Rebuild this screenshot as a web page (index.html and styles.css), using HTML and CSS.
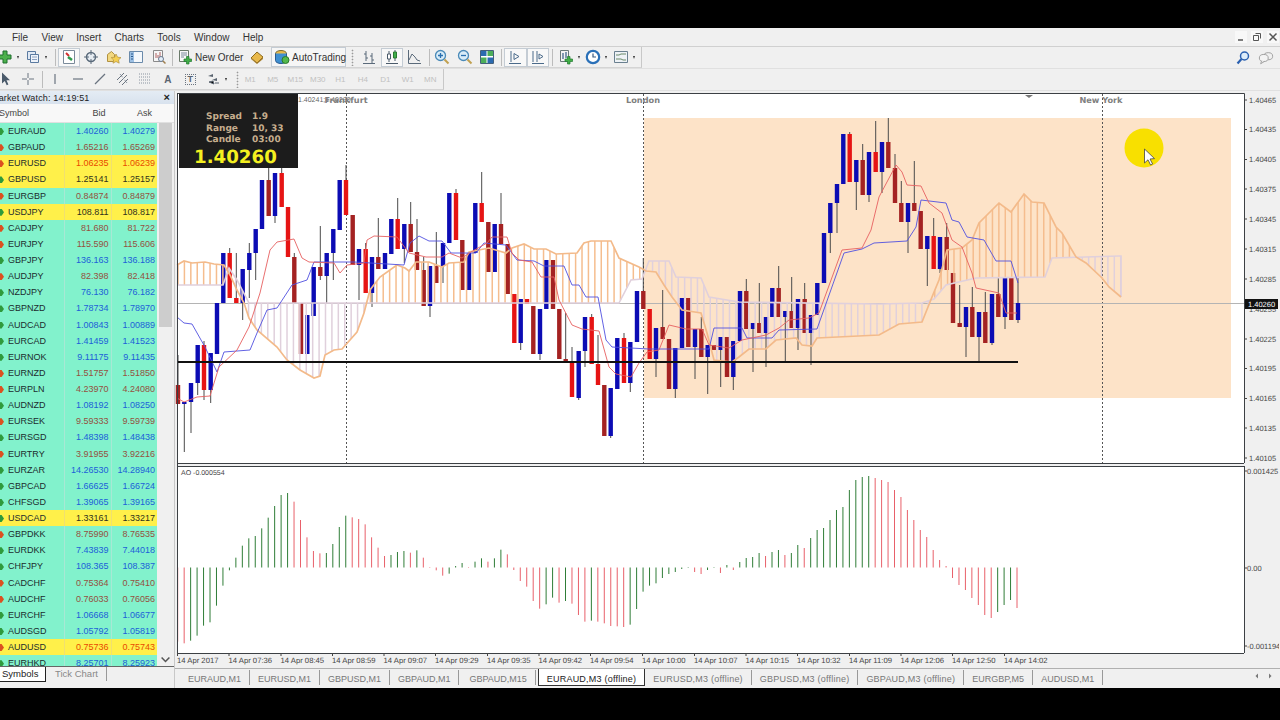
FILE: index.html
```html
<!DOCTYPE html>
<html lang="en">
<head>
    <meta charset="UTF-8">
    <title>MetaTrader - EURAUD,M3 (offline)</title>
    <link rel="stylesheet" href="styles.css">
</head>
<body>
    <div class="window">
        <div class="menubar">
            <span>File</span><span>View</span><span>Insert</span><span>Charts</span><span>Tools</span><span>Window</span><span>Help</span>
            <div class="win-controls">
                <svg viewBox="0 0 12 12"><path d="M3 9h5" stroke="#555" stroke-width="1.5"/></svg>
                <svg viewBox="0 0 12 12"><path d="M4.5 2.5h5v5M2.5 4.5h5v5h-5z" fill="none" stroke="#555"/></svg>
                <svg viewBox="0 0 12 12"><path d="M2.5 2.5l7 7M9.5 2.5l-7 7" stroke="#555" stroke-width="1.5"/></svg>
            </div>
        </div>

        <div class="toolbar">
            <div class="tools tools-main">
                <div class="btn"><svg viewBox="0 0 16 16"><path d="M6 2h4v4h4v4h-4v4H6v-4H2V6h4z" fill="#4cb04c" stroke="#1c6e2c"/></svg></div>
                <i class="caret"></i>
                <div class="btn gap2"><svg viewBox="0 0 16 16"><path d="M2.5 2.5h8v8h-8z" fill="#dfe8f4" stroke="#5a7aa0"/><path d="M5.5 5.5h8v8h-8z" fill="#eef3fa" stroke="#5a7aa0"/><path d="M7 8h5M7 10.5h5" stroke="#8aa0c0"/></svg></div>
                <i class="caret"></i>
                <i class="sep sep-a"></i>
                <div class="btn on"><svg viewBox="0 0 16 16"><path d="M2.5 1.5h11v13h-11z" fill="#fff" stroke="#7a8a9a"/><path d="M5 4l3 3" stroke="#d03030" stroke-width="2"/><path d="M7 8l4 3" stroke="#2e9a4a" stroke-width="2.5"/></svg></div>
                <div class="btn"><svg viewBox="0 0 16 16"><circle cx="8" cy="8" r="4.5" fill="#e6ecf2" stroke="#5a6a7a" stroke-width="1.5"/><path d="M8 1v5M8 10v5M1 8h5M10 8h5" stroke="#5a6a7a"/></svg></div>
                <div class="btn"><svg viewBox="0 0 16 16"><path d="M1.5 5.5l4-3 3 3v7h-7z" fill="#f2d880" stroke="#b09040"/><path d="M10 5l1.600 3.200 3.400.4-2.500 2.300.7 3.300-3.200-1.700-3 1.700.6-3.300-2.400-2.300 3.400-.4z" fill="#f5cf50" stroke="#b09040" stroke-width=".7"/></svg></div>
                <div class="btn"><svg viewBox="0 0 16 16"><path d="M1.5 2.5h13v11h-13z" fill="#f4f8fc" stroke="#6a8aaa"/><path d="M2 3h4v10H2z" fill="#9cc0e4"/><path d="M3 5h2M3 7.5h2M3 10h2" stroke="#2a5a90"/></svg></div>
                <div class="btn"><svg viewBox="0 0 16 16"><path d="M2.5 1.5h9v11h-9z" fill="#f6f6f6" stroke="#8a8a8a"/><path d="M5 9V4M7 9V6M9 9V3" stroke="#b06060"/><circle cx="10" cy="10" r="2.5" fill="#e4eef8" stroke="#6a7a90"/><path d="M12 12l2.500 2.500" stroke="#a08050" stroke-width="1.5"/></svg></div>
                <i class="sep sep-b"></i>
                <div class="btn-text order"><svg viewBox="0 0 16 16"><path d="M2.5 1.5h9v11h-9z" fill="#f8f8f8" stroke="#6a7a6a"/><path d="M4 4h6M4 6h6M4 8h3" stroke="#7a8a9a"/><path d="M9.500 7.500h2.500V10h2.500v2.500H12V15H9.500v-2.500H7V10h2.500z" fill="#42ac48" stroke="#1f7a2e" stroke-width=".7"/></svg><span>New Order</span></div>
                <div class="btn"><svg viewBox="0 0 16 16"><path d="M2 9l6-6 6 5-6 6z" fill="#e8b84a" stroke="#8a6a20"/><path d="M2 9l6 5 6-6v2l-6 5-6-5z" fill="#a88030"/></svg></div>
                <div class="btn-text autotrading"><svg viewBox="0 0 16 16"><ellipse cx="7" cy="4.5" rx="5.5" ry="3" fill="#e8b84a" stroke="#7a6a30"/><path d="M1.5 4.500v7c0 1.700 2.500 3 5.500 3s5.500-1.300 5.500-3v-7" fill="#3f8fd0" stroke="#2a5a90"/><circle cx="11.5" cy="11" r="3.5" fill="#52b84c" stroke="#2a7a2a"/></svg><span>AutoTrading</span></div>
                <i class="grip"></i>
                <div class="btn"><svg viewBox="0 0 16 16"><path d="M5 2v10M3 5h2M5 9h2M11 4v10M9 7h2M11 11h2M2 14.500h12" fill="none" stroke="#5a6a7a"/></svg></div>
                <div class="btn on"><svg viewBox="0 0 16 16"><path d="M5 2v11M11 1v11M2 14.500h12" stroke="#4a5a6a"/><path d="M3.500 5h3v5h-3z" fill="#fff" stroke="#4a5a6a"/><path d="M9.500 3h3v6h-3z" fill="#3fae4a" stroke="#2a7a30"/></svg></div>
                <div class="btn"><svg viewBox="0 0 16 16"><path d="M2.500 1v13.500H15" fill="none" stroke="#5a6a7a"/><path d="M3 11l3-6 3 3 2 3 3 1" fill="none" stroke="#5a6a7a"/></svg></div>
                <i class="sep sep-c"></i>
                <div class="btn"><svg viewBox="0 0 16 16"><circle cx="6.5" cy="6.5" r="5" fill="#d8ecf8" stroke="#4a8ab8" stroke-width="1.3"/><path d="M4 6.500h5M6.500 4v5" stroke="#2a70b0" stroke-width="1.3"/><path d="M10.500 10.500l4 4" stroke="#c0a050" stroke-width="2"/></svg></div>
                <div class="btn"><svg viewBox="0 0 16 16"><circle cx="6.5" cy="6.5" r="5" fill="#d8ecf8" stroke="#4a8ab8" stroke-width="1.3"/><path d="M4 6.500h5" stroke="#2a70b0" stroke-width="1.3"/><path d="M10.500 10.500l4 4" stroke="#c0a050" stroke-width="2"/></svg></div>
                <div class="btn"><svg viewBox="0 0 16 16"><path d="M1.500 1.500h13v13h-13z" fill="#fff" stroke="#44607c"/><path d="M2 2h5.500v5H2z" fill="#2a6ab0"/><path d="M8.500 2H14v5H8.500z" fill="#4cae5a"/><path d="M2 8.500h5.500V14H2z" fill="#4cae5a"/><path d="M8.500 8.500H14V14H8.500z" fill="#2a6ab0"/></svg></div>
                <i class="sep sep-d"></i>
                <div class="btn on"><svg viewBox="0 0 16 16"><path d="M4 2v11M2 14.500h12" stroke="#4a6a8a"/><path d="M7 4.500l5 3-5 3z" fill="none" stroke="#4a6a8a"/></svg></div>
                <div class="btn on"><svg viewBox="0 0 16 16"><path d="M3 2v11M7 2v11M2 14.500h12" stroke="#4a6a8a"/><path d="M9 5l4 2.500L9 10z" fill="none" stroke="#4a6a8a"/></svg></div>
                <i class="sep sep-d"></i>
                <div class="btn"><svg viewBox="0 0 16 16"><path d="M2.500 1.500h8v11h-8z" fill="#f4f4f4" stroke="#6a7a7a"/><path d="M5 4v6M8 3v6" stroke="#5a7a9a" stroke-width="1.5"/><path d="M9.500 7.500H12V10h2.500v2.500H12V15H9.500v-2.500H7V10h2.500z" fill="#42b048" stroke="#1f7a2e" stroke-width=".7"/></svg></div>
                <i class="caret"></i>
                <div class="btn gap2"><svg viewBox="0 0 16 16"><circle cx="8" cy="8" r="6.200" fill="#fff" stroke="#2a70b8" stroke-width="2.200"/><path d="M8 4.500V8h3" fill="none" stroke="#3a5a80" stroke-width="1.200"/></svg></div>
                <i class="caret"></i>
                <div class="btn gap2"><svg viewBox="0 0 16 16"><path d="M1.500 2.500h13v11h-13z" fill="#eef2f6" stroke="#6a8090"/><path d="M3 6h3l2-1 5 0M3 10h5l2 1 3 0" fill="none" stroke="#6a8a6a"/></svg></div>
                <i class="caret"></i>
            </div>
            <div class="tools-right">
                <svg viewBox="0 0 16 16"><circle cx="9.5" cy="6" r="4" fill="#dcecfa" stroke="#2a60b0" stroke-width="1.5"/><path d="M6.500 9l-4 4.500" stroke="#2a60b0" stroke-width="2.200"/></svg>
                <svg viewBox="0 0 18 16"><ellipse cx="11.5" cy="6" rx="5" ry="4" fill="#f0f0f0" stroke="#999"/><ellipse cx="6.5" cy="8" rx="5" ry="4" fill="#f4f4f4" stroke="#999"/><path d="M4 11.500l-1 3 4-2.500" fill="#f4f4f4" stroke="#999"/></svg>
            </div>
        </div>

        <div class="toolbar">
            <div class="tools tools-second">
                <div class="btn"><svg viewBox="0 0 16 16"><path d="M5 1.500v11l2.800-2.600 1.900 4.300 1.700-.8-1.900-4.200H13z" fill="#4a5a6a"/></svg></div>
                <div class="btn"><svg viewBox="0 0 16 16"><path d="M8 2v5M8 9v5M2 8h5M9 8h5" stroke="#6a7480"/></svg></div>
                <i class="sep sep-f"></i>
                <div class="btn"><svg viewBox="0 0 16 16"><path d="M8 3v10" stroke="#6a7480" stroke-width="1.2"/></svg></div>
                <div class="btn"><svg viewBox="0 0 16 16"><path d="M3 8h10" stroke="#6a7480" stroke-width="1.2"/></svg></div>
                <div class="btn"><svg viewBox="0 0 16 16"><path d="M3 13L13 3" stroke="#6a7480" stroke-width="1.2"/></svg></div>
                <div class="btn"><svg viewBox="0 0 16 16"><path d="M2 9l7-7M4 12l8-8M7 14l6-6" stroke="#6a7480"/><path d="M5 3l7 9" stroke="#8a94a0" stroke-dasharray="1.5 1"/></svg></div>
                <div class="btn"><svg viewBox="0 0 16 16"><path d="M2 3h12M2 6h12M2 9h12M2 12h12" stroke="#8a94a0" stroke-dasharray="1 1"/></svg></div>
                <div class="btn tool-letter">A</div>
                <div class="btn"><span class="t-box">T</span></div>
                <div class="btn"><svg viewBox="0 0 16 16"><path d="M3 5l5-2v3zM7 9l5-2v3z" fill="#5a6470"/><path d="M4 11l5 2-1-3zM10 12h4" stroke="#5a6470"/></svg></div>
                <i class="caret"></i>
                <i class="grip grip-b"></i>
                <div class="btn tf">M1</div>
                <div class="btn tf">M5</div>
                <div class="btn tf">M15</div>
                <div class="btn tf">M30</div>
                <div class="btn tf">H1</div>
                <div class="btn tf">H4</div>
                <div class="btn tf">D1</div>
                <div class="btn tf">W1</div>
                <div class="btn tf">MN</div>
            </div>
        </div>

        <div class="main">
            <aside class="market">
                <div class="market-title"><span>Market Watch: 14:19:51</span><b>&times;</b></div>
                <div class="market-head"><span>Symbol</span><span>Bid</span><span>Ask</span></div>
                <div class="market-body">
                    <div class="rows">
                        <div class="row up"><span>EURAUD</span><span>1.40260</span><span>1.40279</span></div>
                        <div class="row down"><span>GBPAUD</span><span>1.65216</span><span>1.65269</span></div>
                        <div class="row down hi"><span>EURUSD</span><span>1.06235</span><span>1.06239</span></div>
                        <div class="row up hi"><span>GBPUSD</span><span>1.25141</span><span>1.25157</span></div>
                        <div class="row down"><span>EURGBP</span><span>0.84874</span><span>0.84879</span></div>
                        <div class="row up hi"><span>USDJPY</span><span>108.811</span><span>108.817</span></div>
                        <div class="row down"><span>CADJPY</span><span>81.680</span><span>81.722</span></div>
                        <div class="row down"><span>EURJPY</span><span>115.590</span><span>115.606</span></div>
                        <div class="row up"><span>GBPJPY</span><span>136.163</span><span>136.188</span></div>
                        <div class="row down"><span>AUDJPY</span><span>82.398</span><span>82.418</span></div>
                        <div class="row up"><span>NZDJPY</span><span>76.130</span><span>76.182</span></div>
                        <div class="row up"><span>GBPNZD</span><span>1.78734</span><span>1.78970</span></div>
                        <div class="row up"><span>AUDCAD</span><span>1.00843</span><span>1.00889</span></div>
                        <div class="row up"><span>EURCAD</span><span>1.41459</span><span>1.41523</span></div>
                        <div class="row up"><span>EURNOK</span><span>9.11175</span><span>9.11435</span></div>
                        <div class="row down"><span>EURNZD</span><span>1.51757</span><span>1.51850</span></div>
                        <div class="row down"><span>EURPLN</span><span>4.23970</span><span>4.24080</span></div>
                        <div class="row up"><span>AUDNZD</span><span>1.08192</span><span>1.08250</span></div>
                        <div class="row down"><span>EURSEK</span><span>9.59333</span><span>9.59739</span></div>
                        <div class="row up"><span>EURSGD</span><span>1.48398</span><span>1.48438</span></div>
                        <div class="row down"><span>EURTRY</span><span>3.91955</span><span>3.92216</span></div>
                        <div class="row up"><span>EURZAR</span><span>14.26530</span><span>14.28940</span></div>
                        <div class="row up"><span>GBPCAD</span><span>1.66625</span><span>1.66724</span></div>
                        <div class="row up"><span>CHFSGD</span><span>1.39065</span><span>1.39165</span></div>
                        <div class="row up hi"><span>USDCAD</span><span>1.33161</span><span>1.33217</span></div>
                        <div class="row down"><span>GBPDKK</span><span>8.75990</span><span>8.76535</span></div>
                        <div class="row up"><span>EURDKK</span><span>7.43839</span><span>7.44018</span></div>
                        <div class="row up"><span>CHFJPY</span><span>108.365</span><span>108.387</span></div>
                        <div class="row down"><span>CADCHF</span><span>0.75364</span><span>0.75410</span></div>
                        <div class="row down"><span>AUDCHF</span><span>0.76033</span><span>0.76056</span></div>
                        <div class="row up"><span>EURCHF</span><span>1.06668</span><span>1.06677</span></div>
                        <div class="row up"><span>AUDSGD</span><span>1.05792</span><span>1.05819</span></div>
                        <div class="row down hi"><span>AUDUSD</span><span>0.75736</span><span>0.75743</span></div>
                        <div class="row up"><span>EURHKD</span><span>8.25701</span><span>8.25923</span></div>
                    </div>
                    <div class="scrollbar">
                        <svg viewBox="0 0 10 10"><path d="M2 6.500L5 3.500l3 3" fill="none" stroke="#555" stroke-width="1.2"/></svg>
                        <div class="scroll-track"><div class="scroll-thumb"></div></div>
                        <svg viewBox="0 0 10 10"><path d="M2 3.500L5 6.500l3-3" fill="none" stroke="#555" stroke-width="1.2"/></svg>
                    </div>
                </div>
                <div class="market-tabs"><span class="market-tab active">Symbols</span><span class="market-tab">Tick Chart</span></div>
            </aside>

            <section class="charts">
                <svg id="chart" class="chart" viewBox="176 92 1104 576">
                    <rect x="176" y="92" width="1104" height="576" fill="#f0f0f0"/>
                    <rect x="179" y="94" width="1066" height="369" fill="#fff"/>
                    <rect x="179" y="467" width="1066" height="186" fill="#fff"/>
                    <rect x="645" y="118" width="587" height="280" fill="#fde3c8"/>

                    <g id="price"></g>
                    <g id="ao"></g>

                    <g class="marker-layer">
                        <circle cx="1145" cy="148" r="19.5" fill="#f8e000"/>
                        <path d="M1145.500 149v14l3.500-3.200 2.600 5.200 2-1-2.600-5 4.500-.4z" fill="#fff" stroke="#444" stroke-width=".8"/>
                    </g>

                    <rect x="180" y="94" width="119" height="74" fill="#1c1c1c"/>
                    <text class="info" x="207" y="119">Spread</text><text class="info" x="253" y="119">1.9</text>
                    <text class="info" x="207" y="131">Range</text><text class="info" x="253" y="131">10, 33</text>
                    <text class="info" x="207" y="142">Candle</text><text class="info" x="253" y="142">03:00</text>
                    <text class="info-price" x="195" y="163">1.40260</text>

                    <text class="stale" x="299" y="102">1.40241;1.40260</text>
                    <text class="session" x="347" y="103">Frankfurt</text>
                    <text class="session" x="644" y="103">London</text>
                    <text class="session" x="1102" y="103">New York</text>
                    <path d="M1026 95h8l-4 3z" fill="#777"/>

                    <g class="frame">
                        <path d="M178 93.500H1245.500V463M178.500 93V653M178 463.500H1245M178 466.500H1245M178 653.500H1245M1245.500 466V653"/>
                    </g>

                    <text class="axis" x="1250" y="102.5">1.40465</text>
                    <text class="axis" x="1250" y="132">1.40435</text>
                    <text class="axis" x="1250" y="162">1.40405</text>
                    <text class="axis" x="1250" y="192">1.40375</text>
                    <text class="axis" x="1250" y="222">1.40345</text>
                    <text class="axis" x="1250" y="252">1.40315</text>
                    <text class="axis" x="1250" y="281.5">1.40285</text>
                    <text class="axis" x="1250" y="311.5">1.40255</text>
                    <text class="axis" x="1250" y="341.5">1.40225</text>
                    <text class="axis" x="1250" y="371">1.40195</text>
                    <text class="axis" x="1250" y="401">1.40165</text>
                    <text class="axis" x="1250" y="431">1.40135</text>
                    <text class="axis" x="1250" y="461">1.40105</text>
                    <rect x="1246" y="299" width="33" height="10" fill="#111"/>
                    <text class="axis axis-now" x="1249" y="306.5">1.40260</text>
                    <text class="axis" x="1248" y="473.5">0.001425</text>
                    <text class="axis" x="1248" y="570.5">0.00</text>
                    <text class="axis" x="1248" y="649">-0.001194</text>
                    <path class="ticks" d="M1245 100h3M1245 129.500h3M1245 159.500h3M1245 189h3M1245 219h3M1245 249h3M1245 279h3M1245 339h3M1245 368.500h3M1245 398.500h3M1245 428h3M1245 458h3M1245 471h3M1245 568h3M1245 646h3"/>

                    <text class="ao-label" x="182" y="475">AO -0.000554</text>

                    <text class="time" x="178" y="663">14 Apr 2017</text>
                    <text class="time" x="229.5" y="663">14 Apr 07:36</text>
                    <text class="time" x="281.5" y="663">14 Apr 08:45</text>
                    <text class="time" x="333" y="663">14 Apr 08:59</text>
                    <text class="time" x="384.5" y="663">14 Apr 09:07</text>
                    <text class="time" x="436" y="663">14 Apr 09:29</text>
                    <text class="time" x="488" y="663">14 Apr 09:35</text>
                    <text class="time" x="539.5" y="663">14 Apr 09:42</text>
                    <text class="time" x="591" y="663">14 Apr 09:54</text>
                    <text class="time" x="643" y="663">14 Apr 10:00</text>
                    <text class="time" x="695" y="663">14 Apr 10:07</text>
                    <text class="time" x="746.5" y="663">14 Apr 10:15</text>
                    <text class="time" x="798" y="663">14 Apr 10:32</text>
                    <text class="time" x="850" y="663">14 Apr 11:09</text>
                    <text class="time" x="901.5" y="663">14 Apr 12:06</text>
                    <text class="time" x="953" y="663">14 Apr 12:50</text>
                    <text class="time" x="1005" y="663">14 Apr 14:02</text>
                    <path class="ticks" d="M178.500 653v3M230 653v3M282 653v3M333.500 653v3M385 653v3M436.500 653v3M488.500 653v3M540 653v3M591.500 653v3M643.500 653v3M695.500 653v3M747 653v3M798.500 653v3M850.500 653v3M902 653v3M953.500 653v3M1005.500 653v3"/>
                </svg>

                <div class="chart-tabs">
                    <span class="chart-tab">EURAUD,M1</span>
                    <span class="chart-tab">EURUSD,M1</span>
                    <span class="chart-tab">GBPUSD,M1</span>
                    <span class="chart-tab">GBPAUD,M1</span>
                    <span class="chart-tab wide">GBPAUD,M15</span>
                    <span class="chart-tab offline active">EURAUD,M3 (offline)</span>
                    <span class="chart-tab offline">EURUSD,M3 (offline)</span>
                    <span class="chart-tab offline">GBPUSD,M3 (offline)</span>
                    <span class="chart-tab offline">GBPAUD,M3 (offline)</span>
                    <span class="chart-tab">EURGBP,M5</span>
                    <span class="chart-tab">AUDUSD,M1</span>
                    <div class="tab-arrows">
                        <svg viewBox="0 0 8 8"><path d="M5 1.500L2.500 4 5 6.500z" fill="#777"/></svg>
                        <svg viewBox="0 0 8 8"><path d="M3 1.500L5.500 4 3 6.500z" fill="#777"/></svg>
                    </div>
                </div>
            </section>
        </div>
    </div>
    <script src="chart.js"></script>
</body>
</html>
```

FILE: styles.css
```css
body {
    margin: 0;
    height: 720px;
    overflow: hidden;
    background-color: #000;
    font-family: "Liberation Sans", Arial, sans-serif;
    color: #222;
}

.window {
    margin-top: 28px;
    height: 660px;
    background-color: #f0f0f0;
    display: flex;
    flex-direction: column;
    overflow: hidden;
}

.menubar {
    height: 19px;
    flex: none;
    display: flex;
    align-items: center;
    gap: 13.3px;
    padding-left: 12px;
    font-size: 10px;
    color: #333;
    border-bottom: 1px solid #d0d0d0;
    box-sizing: border-box;
}

.win-controls {
    margin-left: auto;
    display: flex;
    gap: 4px;
    padding-right: 1px;
}

.win-controls svg {
    width: 12px;
    height: 12px;
    background-color: #f8f8f8;
}

.toolbar {
    height: 22px;
    flex: none;
    display: flex;
    align-items: center;
    border-bottom: 1px solid #e0e0e0;
    box-sizing: border-box;
}

.tools {
    display: flex;
    align-items: center;
    margin-left: -6px;
    height: 21px;
    border-right: 1px solid #c8c8c8;
    border-bottom: 1px solid #d4d4d4;
    box-sizing: border-box;
}

.tools-main {
    padding-right: 6px;
}

.tools-second {
    padding-right: 1px;
}

.btn {
    width: 22.5px;
    height: 19px;
    flex: none;
    display: flex;
    align-items: center;
    justify-content: center;
    box-sizing: border-box;
}

.btn svg,
.btn-text svg {
    width: 16px;
    height: 16px;
    flex: none;
}

.btn.on {
    background-color: #f8f8f8;
    border: 1px solid #c4ccd4;
}

.gap2 {
    margin-left: 2px;
}

.caret {
    width: 0;
    height: 0;
    margin: 0 .5px;
    flex: none;
    border-left: 1.5px solid transparent;
    border-right: 1.5px solid transparent;
    border-top: 3px solid #333;
}

.sep {
    width: 1px;
    height: 17px;
    flex: none;
    background-color: #bcbcbc;
}

.sep-a { margin: 0 1.5px 0 8px; }
.sep-b { margin: 0 3px 0 2px; }
.sep-c { margin: 0 1.5px 0 3px; }
.sep-d { margin: 0 2px 0 2.5px; }
.sep-f { margin: 0 1px 0 3px; }

.btn-text {
    display: flex;
    align-items: center;
    flex: none;
    font-size: 10px;
    color: #333;
    white-space: nowrap;
    box-sizing: border-box;
}

.order {
    width: 66px;
    gap: 2px;
    padding-left: 1px;
    margin-right: 3.5px;
}

.autotrading {
    width: 75px;
    height: 20px;
    gap: 2px;
    margin-left: 3px;
    padding-left: 2px;
    background-color: #f6f6f6;
    border: 1px solid #c4ccd4;
}

.grip {
    width: 3px;
    height: 17px;
    margin: 0 4px 0 5px;
    flex: none;
    background-image: radial-gradient(#9a9a9a 40%, transparent 50%);
    background-size: 3px 3px;
}

.grip-b {
    margin: 0 0 0 9px;
}

.tool-letter {
    font-size: 10px;
    font-weight: bold;
    color: #5a6470;
}

.t-box {
    width: 11px;
    height: 11px;
    box-sizing: border-box;
    border: 1px dotted #6a7480;
    font-size: 9px;
    font-weight: bold;
    line-height: 9px;
    text-align: center;
    color: #5a6470;
}

.tf {
    font-size: 8px;
    color: #c0c0c0;
}

.tools-right {
    margin-left: auto;
    display: flex;
    gap: 7px;
    align-items: center;
    padding-right: 6px;
}

.tools-right svg {
    width: 16px;
    height: 16px;
}

.main {
    flex: 1;
    min-height: 0;
    display: flex;
}

.market {
    width: 175px;
    flex: none;
    display: flex;
    flex-direction: column;
    font-size: 9px;
    border-right: 1px solid #c8c8c8;
    box-sizing: border-box;
}

.market-title {
    height: 13px;
    flex: none;
    display: flex;
    align-items: center;
    justify-content: space-between;
    background: linear-gradient(#e4ecf4, #d8e2ee);
    padding-right: 4px;
    white-space: nowrap;
}

.market-title span {
    margin-left: -9px;
    font-size: 9px;
    letter-spacing: .15px;
}

.market-title b {
    font-size: 11px;
    line-height: 11px;
}

.market-head {
    height: 19px;
    flex: none;
    display: grid;
    grid-template-columns: 64px 46.5px 46.5px;
    align-items: center;
    background-color: #f8f8f8;
    color: #444;
    border-bottom: 1px solid #e0e0e0;
    box-sizing: border-box;
}

.market-head span {
    text-align: right;
    padding-right: 5px;
}

.market-head span:first-child {
    text-align: left;
    margin-left: -1px;
}

.market-body {
    flex: 1;
    min-height: 0;
    display: flex;
    overflow: hidden;
}

.rows {
    width: 157px;
    flex: none;
    overflow: hidden;
}

.row {
    height: 16.13px;
    display: grid;
    grid-template-columns: 64px 46.5px 46.5px;
    align-items: center;
    position: relative;
    background-color: #82f2cc;
}

.row::before {
    content: "";
    position: absolute;
    left: 0;
    top: 5px;
    width: 4px;
    height: 7px;
    clip-path: polygon(0 0, 40% 0, 100% 50%, 40% 100%, 0 100%);
}

.row.up::before {
    background-color: #2f9a3c;
}

.row.down::before {
    background-color: #dc5020;
}

.row.hi {
    background-color: #fff04a;
}

.row span {
    text-align: right;
    padding-right: 2px;
    height: 100%;
    line-height: 16px;
    border-left: 1px solid #a8e8d4;
    box-sizing: border-box;
}

.row.hi span {
    border-left-color: #f0e070;
}

.row span:first-child {
    text-align: left;
    padding-left: 8px;
    border-left: 0;
    color: #1c2c2c;
}

.row.up span {
    color: #1c60d8;
}

.row.down span {
    color: #955040;
}

.row.up.hi span {
    color: #30301c;
}

.row.down.hi span {
    color: #e84a00;
}

.row.up span:first-child,
.row.down span:first-child {
    color: #1c2c2c;
}

.scrollbar {
    width: 13px;
    margin-left: 2px;
    margin-top: -19px;
    flex: none;
    display: flex;
    flex-direction: column;
}

.scrollbar svg {
    width: 13px;
    height: 13px;
    flex: none;
}

.scroll-track {
    flex: 1;
    background-color: #f0f0f0;
}

.scroll-thumb {
    height: 204px;
    margin-top: 6px;
    background-color: #cdcdcd;
}

.market-tabs {
    height: 22px;
    flex: none;
    display: flex;
    align-items: flex-start;
    border-top: 1px solid #666;
    box-sizing: border-box;
    font-size: 9.5px;
}

.market-tab {
    height: 15px;
    line-height: 14px;
    padding: 0 8px 0 2px;
    color: #888;
}

.market-tab.active {
    width: 46px;
    box-sizing: border-box;
    background-color: #fff;
    color: #222;
    border-right: 1px solid #222;
    border-bottom: 1px solid #222;
    margin-right: 7px;
}

.market-tab:last-child {
    height: 14px;
    border-right: 1px solid #999;
}

.charts {
    flex: 1;
    min-width: 0;
    display: flex;
    flex-direction: column;
}

.chart {
    width: 1104px;
    height: 576px;
    flex: none;
    display: block;
    margin-top: 1px;
    text-rendering: geometricPrecision;
}

.frame path {
    fill: none;
    stroke: #3c4044;
    stroke-width: 1;
}

.ticks {
    fill: none;
    stroke: #444;
    stroke-width: 1;
}

.info {
    font: bold 9px "DejaVu Sans", sans-serif;
    fill: #c6ae8e;
}

.info-price {
    font: bold 18.2px "DejaVu Sans", sans-serif;
    fill: #f4f020;
}

.stale {
    font: 7px "Liberation Sans", sans-serif;
    fill: #666;
}

.session {
    font: bold 8.2px "DejaVu Sans", sans-serif;
    fill: #808080;
    text-anchor: middle;
}

.axis {
    font: 7.5px "Liberation Sans", sans-serif;
    fill: #444;
}

.axis-now {
    fill: #fff;
}

.ao-label {
    font: 7px "Liberation Sans", sans-serif;
    fill: #444;
}

.time {
    font: 7.7px "Liberation Sans", sans-serif;
    fill: #444;
}

.chart-tabs {
    flex: 1;
    display: flex;
    align-items: flex-start;
    font-size: 9px;
    color: #777;
    padding-left: 5px;
    border-top: 1px solid #b0b0b0;
    box-sizing: border-box;
}

.chart-tab {
    height: 15px;
    line-height: 18px;
    padding: 0 8px;
    white-space: nowrap;
    border-right: 1px solid #999;
    margin-top: 1px;
}

.chart-tab.wide {
    margin-left: 2px;
    margin-right: 2px;
}

.chart-tab.offline {
    letter-spacing: .22px;
}

.chart-tab.active {
    background-color: #fff;
    color: #222;
    border: 1px solid #333;
    border-top: 0;
    margin-top: 0;
    height: 16px;
    line-height: 20px;
}

.tab-arrows {
    margin-left: auto;
    display: flex;
    gap: 5px;
    padding: 3px 6px 0 0;
}

.tab-arrows svg {
    width: 8px;
    height: 8px;
}
```

FILE: chart.js
```javascript
// x, body top, body bottom, colour, wick top, wick bottom (wick defaults to the body)
const CANDLES = [
    [179,385,404,'m',355],[185.3,402,404,'b',402,452],[192,383,402,'b',383,433],[198.7,345,383,'b',345,395],
    [205,345,390,'r',341,400],[211.7,353,390,'b',353,403],[218,303,354,'b'],[224.3,253,303,'b'],
    [230.7,253,298,'r',248],[237.3,298,303,'r',253],[243.7,269,303,'b',269,320],[250.3,253,270,'b',243,298],
    [256.7,229,253,'b',229,280],[263,180,229,'b'],[269.7,180,216,'m',167],[276,173,216,'b',173,223],
    [282.7,173,207,'r',167],[289,207,257,'r'],[295.3,257,303,'m',253],[302,303,354,'m'],
    [308.3,315,354,'b'],[314.7,267,316,'b'],[321.3,267,276,'m',226,280],[327.7,253,276,'b',253,303],
    [334.3,229,253,'b',229,280],[340.7,180,230,'b'],[347,180,215,'r',165],[353.7,215,265,'m'],
    [360,249,265,'b',249,300],[366.7,249,293,'r',243],[373,257,293,'b',257,307],[379.3,257,269,'m',218],
    [386,253,269,'b'],[392.3,219,254,'b'],[398.7,219,249,'r',198],[405.3,224,249,'b',224,263],
    [411.7,224,252,'m',202],[418,252,270,'m',219],[424.7,270,306,'m',257],[431,266,306,'b',266,317],
    [437.3,266,283,'m',232],[444,243,266,'b',243,283],[450.3,193,243,'b'],[457,193,240,'r',189],
    [463.3,240,290,'m'],[470,253,290,'b'],[476.3,203,253,'b'],[482.7,203,222,'r',172],
    [489.3,222,272,'m'],[495.7,224,272,'b'],[502,224,244,'m',193],[508.7,244,294,'m'],
    [515.3,294,343,'r'],[521.7,299,343,'b',299,350],[528,299,304,'r'],[534.3,306,354,'m'],
    [541,309,354,'b',309,360],[547.3,260,309,'b'],[554,260,309,'m'],[560.3,309,359,'m'],
    [566.7,359,363,'m',313],[573,363,397,'r',347],[579.7,351,398,'b',351,400],[586,317,351,'b',317,367],
    [592.7,317,364,'r',314],[599,364,385,'r',335],[605.3,385,436,'m'],[611.7,388,436,'b',388,438],
    [618.3,338,389,'b'],[625,338,383,'r',333],[631.3,342,383,'b',342,392],[638,291,342,'b'],
    [644.3,291,309,'m',258],[650.7,309,359,'r'],[657,328,359,'b',328,377],[663.7,327,339,'m',290],
    [670,339,389,'m'],[676.3,348,389,'b',348,398],[683,298,348,'b'],[689.3,298,347,'m'],
    [696,329,347,'b',329,379],[702.3,329,357,'m',317],[708.7,345,357,'b',345,394],[715,345,350,'m'],
    [721.7,337,350,'b',337,387],[728,337,377,'m'],[734.3,341,377,'b',341,390],[741,291,341,'b'],
    [747.3,291,329,'m',279],[754,323,329,'b',323,372],[760.3,323,333,'m',283],[767,317,333,'b',317,367],
    [773.3,288,317,'b'],[779.7,288,317,'m',266],[786.3,311,317,'b',311,361],[792.7,311,328,'m',277],
    [799,299,328,'b',299,350],[805.7,299,333,'m',283],[812,315,333,'b',315,365],[818.3,283,315,'b'],
    [825,233,283,'b'],[831.3,203,233,'b',203,253],[838,184,203,'b',184,233],[844.3,134,184,'b'],
    [850.7,134,182,'r',132],[857.3,160,182,'b',160,210],[863.7,160,195,'m',144],[870,152,195,'b',152,202],
    [876.7,152,172,'r',121],[883,142,172,'b',142,193],[889.3,142,168,'m',118],[896,168,203,'m',154],
    [902.3,203,222,'m',181],[909,203,222,'b',203,253],[915.3,203,211,'m',161],[921.7,211,249,'m'],
    [928.3,236,249,'b',236,286],[934.7,236,269,'r',218],[941,237,269,'b',237,273],[947.7,237,270,'m',223],
    [954,273,323,'m'],[960.7,323,327,'m',285],[967,307,327,'b',307,357],[973.3,307,337,'m',287],
    [980,312,337,'b',312,362],[986.3,312,343,'m',292],[993,294,343,'b',294,345],[999.3,294,317,'m',278],
    [1006,278,317,'b',278,329],[1012.3,278,320,'m'],[1019,303,320,'b',278,323]
];

const SPAN_A = [
    [178,265],[185,261],[193,263],[206,262],[215,264],[225,265],[231,275],[238,290],[245,303],[250,318],
    [258,330],[278,347],[288,360],[301,370],[315,378],[321,376],[326,355],[335,350],[343,349],[358,332],
    [365,313],[371,290],[381,277],[398,265],[406,268],[410,271],[417,262],[430,262],[443,267],[450,263],
    [465,262],[470,252],[490,248],[507,253],[513,248],[525,244],[535,249],[547,249],[557,254],[578,253],
    [585,243],[592,241],[612,241],[620,258],[640,267],[647,271],[657,272],[665,285],[673,297],[683,310],
    [702,313],[708,333],[715,360],[733,362],[740,357],[750,349],[767,349],[777,340],[797,338],[803,345],
    [813,346],[818,338],[880,335],[900,324],[923,322],[933,297],[940,280],[948,250],[963,248],[973,240],
    [980,223],[1000,203],[1012,212],[1025,194],[1033,202],[1045,203],[1057,227],[1063,233],[1077,257],
    [1087,263],[1103,278],[1110,287],[1122,297]
];

const SPAN_B = [
    [178,285],[224,285],[230,268],[238,280],[250,303],[620,303],[632,280],[643,279],[650,261],[670,261],
    [677,277],[702,278],[710,297],[740,302],[880,304],[923,303],[935,299],[947,285],[977,278],[1046,277],
    [1053,258],[1120,256],[1122,256],[1122,297]
];

const TENKAN = [
    [178,398],[185,402],[198,397],[211,396],[220,367],[238,350],[250,327],[261,293],[271,250],[278,242],
    [295,239],[303,258],[310,262],[335,263],[341,273],[348,265],[365,263],[368,240],[375,236],[398,237],
    [410,253],[427,257],[443,257],[450,253],[463,258],[472,252],[488,243],[493,237],[508,237],[513,253],
    [520,260],[533,262],[542,277],[555,277],[560,300],[573,325],[583,329],[600,331],[610,367],[617,374],
    [632,377],[640,363],[648,352],[660,350],[670,325],[687,329],[703,329],[710,345],[730,348],[743,340],
    [767,335],[780,328],[790,320],[810,318],[820,313],[843,250],[863,248],[872,230],[880,197],[897,165],
    [903,172],[908,185],[922,186],[930,203],[943,213],[953,240],[963,247],[973,273],[977,288],[1000,293],
    [1007,313],[1018,313]
];

const KIJUN = [
    [178,317],[185,323],[193,324],[206,347],[218,372],[225,352],[251,350],[258,333],[268,310],[278,308],
    [293,285],[308,280],[315,262],[355,262],[405,265],[411,243],[420,236],[430,241],[443,241],[452,253],
    [477,253],[485,243],[507,245],[518,260],[535,261],[545,266],[565,266],[573,285],[580,285],[587,297],
    [599,297],[607,340],[613,347],[650,349],[710,349],[715,328],[743,328],[748,338],[773,338],[780,330],
    [818,329],[845,253],[863,249],[875,243],[908,241],[917,227],[922,200],[947,203],[953,220],[960,222],
    [968,237],[985,240],[997,261],[1012,261],[1019,283]
];

// AO bar ends read off the reference; green when rising, red when falling
const AO_LEFT = [
    530,535,527,512,482,472,422,362,316,278,242,220,213,190,158,123,90,84,110,165,217,258,265,264,237,186,
    152,157,162,178,217,248,273,270,261,258,263,256,278,309,316,332,326,303,294,306,290,280,290,280,254,268,
    315,348,365,408,431,418,398,413,408,416,450,470,467,470,475,483,484,486,479,432,380,362,355
].map(v => 465 + v / 3);
const AO_RIGHT = [
    578,574,572,569,568,572,574,570,567,573,565,570,562,558,557,553,556,552,550,555,553,545,548,538,530,528,
    520,510,507,490,480,477,476,478,480,482,490,497,510,520,530,537,550,560,566,578,585,590,598,605,615,618,
    612,605,600,608
];

const COLORS = { b: '#0c0cb4', r: '#e61414', m: '#a42222' };
const svgNS = 'http://www.w3.org/2000/svg';
const priceLayer = document.getElementById('price');
const aoLayer = document.getElementById('ao');

function add(parent, tag, attrs) {
    const el = document.createElementNS(svgNS, tag);
    Object.keys(attrs).forEach(key => el.setAttribute(key, attrs[key]));
    parent.appendChild(el);
    return el;
}

function line(parent, x1, y1, x2, y2, stroke, width) {
    return add(parent, 'line', { x1, y1, x2, y2, stroke, 'stroke-width': width });
}

function polyline(points, stroke, width) {
    add(priceLayer, 'polyline', {
        points: points.map(p => p.join(',')).join(' '),
        fill: 'none',
        stroke,
        'stroke-width': width
    });
}

function valueAt(points, x) {
    for (let i = 1; i < points.length; i++) {
        if (x <= points[i][0]) {
            const [x0, y0] = points[i - 1];
            const [x1, y1] = points[i];
            return x1 === x0 ? y1 : y0 + (y1 - y0) * (x - x0) / (x1 - x0);
        }
    }
    return points[points.length - 1][1];
}

function drawPrice() {
    [347.5, 644.5, 1103.5].forEach(x => {
        add(priceLayer, 'line', { x1: x, y1: 94, x2: x, y2: 463, stroke: '#555', 'stroke-dasharray': '2 2' });
    });
    line(priceLayer, 178, 303.5, 1245, 303.5, '#b4b4b4', 1);

    CANDLES.forEach(([x, top, bottom, colour, wickTop, wickBottom]) => {
        line(priceLayer, x, wickTop === undefined ? top : wickTop, x, wickBottom === undefined ? bottom : wickBottom, '#4a4a4a', 1);
        add(priceLayer, 'rect', { x: x - 2.2, y: top, width: 4.4, height: bottom - top, fill: COLORS[colour] });
    });

    // cloud hatching sits over the candles, same spacing as the bars
    for (let x = 179; x < 1122; x += 6.413) {
        const a = valueAt(SPAN_A, x);
        const b = valueAt(SPAN_B, x);
        line(priceLayer, x, a, x, b, a < b ? '#f5bd8e' : '#e0d0dc', 1.5);
    }
    polyline(SPAN_B, '#e0d0dc', 1.6);
    polyline(SPAN_A, '#f3ba8a', 1.7);
    polyline(KIJUN, '#5050e0', .9);
    polyline(TENKAN, '#e66060', .9);
    line(priceLayer, 178, 362, 1019, 362, '#111', 2);
}

function drawBars(values, startX, endX, previous) {
    const step = (endX - startX) / (values.length - 1);
    values.forEach((y, i) => {
        const x = startX + step * i;
        line(aoLayer, x, 567.5, x, y, y < previous ? '#2f7d37' : '#e8606a', 1);
        previous = y;
    });
    return previous;
}

drawPrice();
const last = drawBars(AO_LEFT, 178.7, 657, 640);
drawBars(AO_RIGHT, 663.4, 1018, last);
```
